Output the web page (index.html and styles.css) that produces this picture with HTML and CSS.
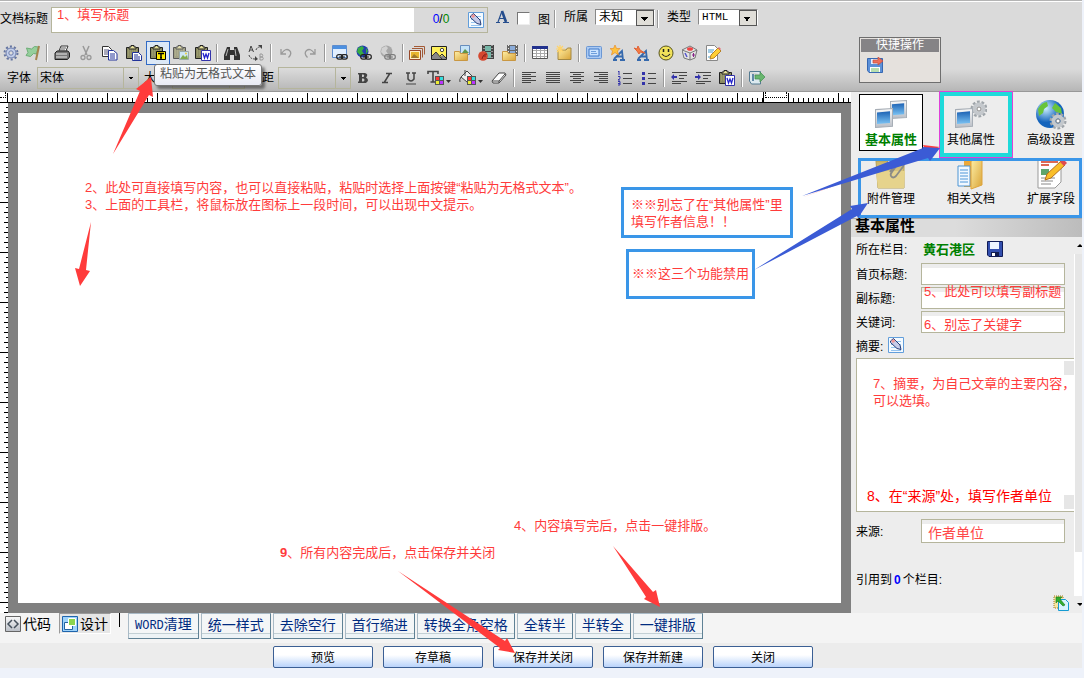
FILE: index.html
```html
<!DOCTYPE html>
<html lang="zh-CN">
<head>
<meta charset="utf-8">
<title>文档编辑</title>
<link rel="stylesheet" href="styles.css">
</head>
<body>
<svg class="sprite" aria-hidden="true">
  <defs>
    <linearGradient id="gBlue" x1="0" y1="0" x2="0" y2="1"><stop offset="0" stop-color="#1d62b4"/><stop offset="1" stop-color="#7cc4f4"/></linearGradient>
    <linearGradient id="gGold" x1="0" y1="0" x2="1" y2="1"><stop offset="0" stop-color="#fff0a8"/><stop offset="1" stop-color="#d9a437"/></linearGradient>
    <linearGradient id="gKhaki" x1="0" y1="0" x2="0" y2="1"><stop offset="0" stop-color="#c9b367"/><stop offset="1" stop-color="#f0e0a2"/></linearGradient>
    <radialGradient id="gGlobe" cx="35%" cy="30%"><stop offset="0" stop-color="#cdf0ff"/><stop offset="1" stop-color="#1464bc"/></radialGradient>
    <linearGradient id="gGrey" x1="0" y1="0" x2="0" y2="1"><stop offset="0" stop-color="#fafafa"/><stop offset="1" stop-color="#b9bec6"/></linearGradient>
  </defs>
  <symbol id="clip" viewBox="0 0 16 16"><path d="M.5 2.500h12v11H.5z" fill="#8b8b62" stroke="#222"/><path d="M2 4h9M2 6h9M2 8h9M2 10h9" stroke="#a9a97c" stroke-dasharray="1 1"/><path d="M3 4V2h2V.5h3V2h2v2z" fill="#e8e29a" stroke="#222"/></symbol>
  <symbol id="chain" viewBox="0 0 12 6"><rect x=".7" y=".7" width="6" height="4.400" rx="2" fill="none" stroke="#222" stroke-width="1.200"/><rect x="5.300" y=".7" width="6" height="4.400" rx="2" fill="none" stroke="#222" stroke-width="1.200"/><path d="M3 3h6" stroke="#222"/></symbol>
  <symbol id="gear" viewBox="0 0 16 16"><circle cx="8" cy="8" r="6.500" fill="none" stroke="#6474a0" stroke-width="2" stroke-dasharray="2.100 2"/><circle cx="8" cy="8" r="5" fill="#c3cfea" stroke="#6b7daf"/><circle cx="8" cy="8" r="2.200" fill="#ddd" stroke="#6b7daf"/></symbol>
  <symbol id="flag" viewBox="0 0 16 16"><path d="M1.500 3l5 1 3-2.500 4 .5-2 7-3-.5-3 3-4.500-1 2-3z" fill="#95cf9c" stroke="#6dae77"/><path d="M14 1l-3 14" stroke="#a5854e" stroke-width="2"/></symbol>
  <symbol id="printer" viewBox="0 0 16 16"><path d="M5 6l2-5h7l-2 5" fill="#fff" stroke="#333"/><path d="M7 3h5M6 5h5" stroke="#555"/><path d="M1 8l2-2h11l1.500 2v4l-2 2.500H1z" fill="#777" stroke="#222"/><path d="M2 9h11M2 12h11" stroke="#eee"/></symbol>
  <symbol id="cut" viewBox="0 0 16 16"><path d="M5 1l4 9M11 1l-4 9" stroke="#999" stroke-width="1.500" fill="none"/><circle cx="5" cy="12.500" r="2" fill="none" stroke="#999" stroke-width="1.300"/><circle cx="11" cy="12.500" r="2" fill="none" stroke="#999" stroke-width="1.300"/></symbol>
  <symbol id="copy" viewBox="0 0 16 16"><path d="M.5 1.500h6l3 3v7h-9z" fill="#fff" stroke="#333"/><path d="M2 5h5M2 7h5M2 9h5" stroke="#557"/><path d="M6.500 5.500h5l3.500 3v6.500H6.500z" fill="#fff" stroke="#239"/><path d="M8 9h5M8 11h5M8 13h5" stroke="#239"/></symbol>
  <symbol id="paste" viewBox="0 0 16 16"><use href="#clip"/><path d="M6.500 7.500h6l3 3v5h-9z" fill="#fff" stroke="#239"/><path d="M8 10h4M8 12h6M8 14h6" stroke="#239"/></symbol>
  <symbol id="pastetext" viewBox="0 0 16 16"><use href="#clip"/><path d="M6.500 6.500h9v8h-9z" fill="#ffe900" stroke="#000"/><path d="M8 8.500h6M11 8.500v5M10 13h2" stroke="#000" stroke-width="1.500"/></symbol>
  <symbol id="pasteimg" viewBox="0 0 16 16"><g opacity=".7"><use href="#clip"/></g><path d="M6.500 6.500h9v8h-9z" fill="#cde6f4" stroke="#9aa"/><path d="M7 14l3-4 2 2 2-2 1 4z" fill="#83ab4d"/><circle cx="13" cy="8.500" r="1" fill="#eccd3b"/></symbol>
  <symbol id="pasteword" viewBox="0 0 16 16"><use href="#clip"/><path d="M6.500 5.500h9v10h-9z" fill="#fff" stroke="#33a"/><path d="M8 8l1.500 5L11 9l1.500 4L14 8" fill="none" stroke="#22c" stroke-width="1.300"/></symbol>
  <symbol id="find" viewBox="0 0 16 16"><path d="M3 2h3v3h4V2h3l3 8v5h-6v-5H6v5H0v-5z" fill="#333"/><path d="M4 4L2 11M11 4l1 7" stroke="#bbb"/></symbol>
  <symbol id="replace" viewBox="0 0 16 16"><path d="M1 7l2-6 2.500 6M2 5h3" fill="none" stroke="#444"/><path d="M12 9v6h2.500q1.500-1.500 0-3H12h2q1.500-1.500 0-3z" fill="none" stroke="#999"/><path d="M8 5q1-3 4-3M1 10q1 4 6 4" fill="none" stroke="#444" stroke-dasharray="2 1"/><path d="M7 11l3 3-3 2zM10 0l4 0v4z" fill="#444"/></symbol>
  <symbol id="undo" viewBox="0 0 16 16"><path d="M3 4v5h5M3.500 8.500q4-6 8-3 3 3-1 7" fill="none" stroke="#999" stroke-width="1.300"/></symbol>
  <symbol id="redo" viewBox="0 0 16 16"><path d="M13 4v5H8M12.500 8.500q-4-6-8-3-3 3 1 7" fill="none" stroke="#999" stroke-width="1.300"/></symbol>
  <symbol id="linkwin" viewBox="0 0 16 16"><path d="M.5.5h14v12H.5z" fill="#e1efff" stroke="#5d8dce"/><path d="M1 1h13v3H1z" fill="#4d90e0"/><use href="#chain" x="4" y="9" width="12" height="6"/></symbol>
  <symbol id="linkglobe" viewBox="0 0 16 16"><circle cx="6.500" cy="6.500" r="6" fill="#223fae"/><path d="M2 3l4-2 2 2-2 3 2 3-3 2-4-4zM10 3l2 3-2 3z" fill="#35ad43"/><use href="#chain" x="4" y="9" width="12" height="6"/></symbol>
  <symbol id="unlink" viewBox="0 0 16 16"><g opacity=".5"><circle cx="6.500" cy="6.500" r="6" fill="#777"/><path d="M2 3l4-2 2 2-2 3 2 3-3 2-4-4z" fill="#ccc"/><use href="#chain" x="4" y="9" width="12" height="6"/></g></symbol>
  <symbol id="album" viewBox="0 0 16 16"><path d="M5 1.500h10.500v8M3 3.500h10.500v9" fill="none" stroke="#a35b37"/><path d="M.5 5.500h11v9H.5z" fill="#fff0c1" stroke="#97482a"/><path d="M2 7h8v6H2z" fill="#e7b52c"/><path d="M2 13l3-4 5 4z" fill="#9e772b"/></symbol>
  <symbol id="image" viewBox="0 0 16 16"><path d="M.5 1.500h15v13H.5z" fill="#fff15a" stroke="#222"/><path d="M1 14V11l4-4 4 5 3-2 3 3v1z" fill="#888"/><path d="M1 11l4-4 6 7M9 11l2-2 4 4" fill="none" stroke="#333"/><circle cx="11" cy="5" r="1.700" fill="#fff" stroke="#444"/></symbol>
  <symbol id="folderimg" viewBox="0 0 16 16"><path d="M6.500.5h9v9h-9z" fill="#c5e3f8" stroke="#678dbd"/><path d="M8 8l3-4 4 4z" fill="#60964a"/><path d="M.5 6.500h5l1 2h7v7H.5z" fill="url(#gGold)" stroke="#c99742"/></symbol>
  <symbol id="flash" viewBox="0 0 16 16"><path d="M4 0h12v14H4z" fill="#444"/><path d="M6 0v14M14 0v14" stroke="#eee" stroke-dasharray="1 2"/><path d="M7 1h6v5H7zM7 7h6v6H7z" fill="#76b7a8"/><circle cx="5" cy="11" r="4.800" fill="#d5482f"/><path d="M4 14q1-5 5-5M5 11h3" stroke="#8c2018" fill="none"/></symbol>
  <symbol id="media" viewBox="0 0 16 16"><path d="M5 0h11v11H5z" fill="#666"/><path d="M8 1h5v4H8zM8 6h5v5H8z" fill="#8aabd8"/><path d="M6.500 0v11M14.500 0v11" stroke="#eee" stroke-dasharray="1 2"/><path d="M.5 6.500h5l1 2h7v7H.5z" fill="url(#gGold)" stroke="#c99742"/></symbol>
  <symbol id="table" viewBox="0 0 16 16"><path d="M.5 1.500h15v12H.5z" fill="#fff" stroke="#555"/><path d="M1 5.500h14M1 8.500h14M1 11.500h14M4.500 4v9M8.500 4v9M12.500 4v9" stroke="#aaa"/><path d="M0 1h16v3H0z" fill="#22328e"/></symbol>
  <symbol id="newfolder" viewBox="0 0 16 16"><path d="M2 5h8l1.500-2h3.500v11.500H2z" fill="url(#gGold)" stroke="#a48842"/><path d="M4 0v9M0 4h9M1 1l6 6M7 1L1 7" stroke="#ffd46b" stroke-width="1.200"/></symbol>
  <symbol id="panel" viewBox="0 0 16 16"><rect x=".5" y="1.500" width="15" height="12" rx="1" fill="#a9c9f3" stroke="#6b97d3"/><path d="M3 4h10v7H3z" fill="#cbe3ff" stroke="#3f78c8"/><path d="M5 6.500h5M5 8.500h6" stroke="#6d9ddb"/></symbol>
  <symbol id="stara" viewBox="0 0 16 16"><path d="M4 14L12 6l1 9M7 11.500h6M3 15h4M10 15h5" stroke="#3569ad" stroke-width="1.800" fill="none"/><path d="M5 0l1.500 3.500H10L7.500 6l1 4L5 7.500 1.500 10l1-4L0 3.500h3.500z" fill="#ffc33d" stroke="#e88e28" stroke-width=".7"/></symbol>
  <symbol id="fixa" viewBox="0 0 16 16"><path d="M4 14L12 6l1 9M7 11.500h6M3 15h4M10 15h5" stroke="#3569ad" stroke-width="1.800" fill="none"/><path d="M0 3l3 1 1-3 2 4 5 3-5-1-1 2-2-3z" fill="#f57c42" stroke="#df643a"/></symbol>
  <symbol id="smile" viewBox="0 0 16 16"><circle cx="8" cy="8" r="7" fill="#f1e25a" stroke="#57541f"/><path d="M4 9q4 5 8 0" fill="none" stroke="#222" stroke-width="1.200"/><path d="M5.500 4v3M10.500 4v3" stroke="#222" stroke-width="1.500"/></symbol>
  <symbol id="cube" viewBox="0 0 16 16"><path d="M8 1l7 4-2 8-5 2-6-2-2-8z" fill="#e4e4e4" stroke="#777"/><path d="M0 5l8 3 7-3M8 8v7" fill="none" stroke="#777"/><ellipse cx="8" cy="4" rx="3" ry="1.800" fill="#f04343"/><path d="M3 8l2 4" stroke="#55c" stroke-width="1.500"/><path d="M11.500 8v4M10 10h3" stroke="#828"/></symbol>
  <symbol id="edit" viewBox="0 0 16 16"><path d="M1.500.5h8l3 3v12h-11z" fill="#fff" stroke="#888"/><path d="M3 5h6M3 7h5M3 12h7" stroke="#479ac9"/><path d="M5 14l1-4 7-7 3 3-7 7z" fill="#ffcf35" stroke="#b88126"/><path d="M13 3l1-1 2 2-1 1z" fill="#e56c77"/></symbol>
  <symbol id="bold" viewBox="0 0 16 16"><path d="M3 3h7q4 1 1 4.500 4 2.500 0 5.500H3v-1.500h1V4.500H3zM7 4.500v2.500h1.500q1.500-1.300 0-2.500zM7 8.500v3h1.500q2-1.500 0-3z" fill="#444" fill-rule="evenodd"/></symbol>
  <symbol id="italic" viewBox="0 0 16 16"><path d="M7 3.500h6M3 12.500h6M10.500 4l-5 8" stroke="#444" stroke-width="1.500"/></symbol>
  <symbol id="underline" viewBox="0 0 16 16"><path d="M3 3h4M9 3h4M5 3v6q3 4 6 0V3" fill="none" stroke="#444" stroke-width="1.500"/><path d="M3 14h10" stroke="#444"/></symbol>
  <symbol id="swatch" viewBox="0 0 9 9"><path d="M0 0h9v9H0z" fill="#555"/><path d="M1 1h3v3H1z" fill="#f33"/><path d="M5 1h3v3H5z" fill="#3dd"/><path d="M1 5h3v3H1z" fill="#ee3"/><path d="M5 5h3v3H5z" fill="#b3f"/></symbol>
  <symbol id="forecolor" viewBox="0 0 24 16"><path d="M1 4V1.500h10V4M6 2v10M3.500 12h5" stroke="#444" stroke-width="1.600" fill="none"/><use href="#swatch" x="8" y="6" width="9" height="9"/><path d="M19 10h5l-2.500 3z" fill="#333"/></symbol>
  <symbol id="backcolor" viewBox="0 0 24 16"><path d="M2 7l6-6 6 6-6 5z" fill="#eee" stroke="#444"/><path d="M2 7q-2 3-1 5M6 0v6" stroke="#444" fill="none"/><use href="#swatch" x="8" y="6" width="9" height="9"/><path d="M19 10h5l-2.500 3z" fill="#333"/></symbol>
  <symbol id="eraser" viewBox="0 0 16 16"><path d="M1 11l7-8h6l1 2-7 8H2z" fill="#fff" stroke="#444"/><path d="M2 11h6l6-7M8 11v2" fill="none" stroke="#444"/></symbol>
  <symbol id="left" viewBox="0 0 16 16"><path d="M1 2.500h14M1 4.500h9M1 6.500h14M1 8.500h9M1 10.500h14M1 12.500h9" stroke="#444"/></symbol>
  <symbol id="center" viewBox="0 0 16 16"><path d="M1 2.500h14M4 4.500h8M1 6.500h14M4 8.500h8M1 10.500h14M4 12.500h8" stroke="#444"/></symbol>
  <symbol id="justify" viewBox="0 0 16 16"><path d="M1 2.500h14M1 4.500h14M1 6.500h14M1 8.500h14M1 10.500h14M1 12.500h14" stroke="#444"/></symbol>
  <symbol id="right" viewBox="0 0 16 16"><path d="M1 2.500h14M6 4.500h9M1 6.500h14M6 8.500h9M1 10.500h14M6 12.500h9" stroke="#444"/></symbol>
  <symbol id="ol" viewBox="0 0 16 16"><path d="M6 3.500h9M6 8.500h9M6 13.500h9" stroke="#444"/><path d="M1 2l1-1v4M1 6.500h2v2l-2 1.500h2M1 11.500h2v2H1h2V15H1" stroke="#33a" fill="none"/></symbol>
  <symbol id="ul" viewBox="0 0 16 16"><path d="M7 3.500h8M7 8.500h8M7 13.500h8" stroke="#444"/><path d="M1 2h3v3H1zM1 7h3v3H1zM1 12h3v3H1z" fill="#33a"/></symbol>
  <symbol id="outdent" viewBox="0 0 16 16"><path d="M1 2.500h15M8 5.500h8M8 8.500h5M1 11.500h15M1 13.500h9" stroke="#444"/><path d="M0 7l3-3v2h3v2H3v2z" fill="#33a"/></symbol>
  <symbol id="indent" viewBox="0 0 16 16"><path d="M1 2.500h15M8 5.500h8M8 8.500h5M1 11.500h15M1 13.500h9" stroke="#444"/><path d="M6 7L3 4v2H0v2h3v2z" fill="#33a"/></symbol>
  <symbol id="export" viewBox="0 0 16 16"><path d="M.5 1.500h11v3M.5 2v9l2 3h9v-3" fill="#dce9ef" stroke="#557b91"/><path d="M4 4v7" stroke="#6089a6" stroke-width="2"/><path d="M6 5h5V2l5 5-5 5V9H6z" fill="#69b66e" stroke="#3f8e51" stroke-width=".7"/></symbol>
  <symbol id="pencilbox" viewBox="0 0 16 16"><path d="M.5.5h15v15H.5z" fill="#f4faff" stroke="#629edb"/><path d="M3 4.500h10M3 7.500h10M3 10.500h10M3 13.500h10" stroke="#94c3ef"/><path d="M2.500 4l3-2.500 6.500 6.500 1 4.500-4-1-6.500-6z" fill="#c6cbe8" stroke="#263c76"/><path d="M3 4l2.500-2 2 2-2.500 2z" fill="#ee9696"/></symbol>
  <symbol id="fonta" viewBox="0 0 16 16"><path d="M4 13L8 2M5.500 9.500h5M2 13.500h4M9 13.500h6" fill="none" stroke="#254d8d" stroke-width="1.200"/><path d="M8 2l4 11" stroke="#254d8d" stroke-width="2.600"/></symbol>
  <symbol id="savearrow" viewBox="0 0 16 16"><path d="M.5 1.500h15v14H2l-1.500-2z" fill="#5d91d8" stroke="#3768b2"/><path d="M4 2h8v5H4z" fill="#e4f0ff"/><path d="M3 10h10v5H3z" fill="#fff"/><path d="M4 12h8M4 14h8" stroke="#70bf61"/><path d="M6 3h5V0l5 4-5 4V6H6z" fill="#ef7059" stroke="#c64b3c" stroke-width=".7"/></symbol>
  <symbol id="disk" viewBox="0 0 16 16"><path d="M.5.5h15v15H2L.5 14z" fill="#334fae" stroke="#101b56"/><path d="M3 1h9v7H3z" fill="#edf4ff"/><path d="M4 11h8v4H4z" fill="#111c4c"/><path d="M5 12h3v3H5z" fill="#fff"/></symbol>
  <symbol id="pagearrow" viewBox="0 0 16 16"><path d="M1 1h9v12H1z" fill="#f7e5a0" stroke="#9e7821" stroke-dasharray="1 1"/><path d="M5.500 4.500h7l3 3v8h-10z" fill="#d8f3ff" stroke="#159bd2"/><path d="M3 2h6L7 4l5 6-2 1-5-5-2 2z" fill="#32ad2e" stroke="#17791c" stroke-width=".6"/></symbol>
  <symbol id="code" viewBox="0 0 16 16"><path d="M.5.5h15v15H.5z" fill="url(#gGrey)" stroke="#666"/><path d="M7 4L3 8l4 4M9 4l4 4-4 4" fill="none" stroke="#45505c" stroke-width="1.500"/></symbol>
  <symbol id="design" viewBox="0 0 16 16"><path d="M.5.5h15v15H.5z" fill="#9dd2fa" stroke="#1f65ad"/><path d="M2.500 6.500h8v7h-8z" fill="#fff" stroke="#2263a1"/><path d="M6.500 2.500h7v7h-7z" fill="#8cd44e" stroke="#fff"/></symbol>
  <symbol id="screen" viewBox="0 0 18 18" preserveAspectRatio="none"><path d="M.5 1.500l17-1v16l-17 1z" fill="url(#gGrey)" stroke="#a7aeb6"/><path d="M2 4l13-1v10.500L2 14.500z" fill="url(#gBlue)"/></symbol>
  <symbol id="cog" viewBox="0 0 18 18"><circle cx="9" cy="9" r="7" fill="none" stroke="#9fa5aa" stroke-width="3" stroke-dasharray="2.700 1.700"/><circle cx="9" cy="9" r="4.500" fill="none" stroke="#c4c8cc" stroke-width="4"/><circle cx="9" cy="9" r="2" fill="#fff" stroke="#888"/></symbol>
  <symbol id="nbasic" viewBox="0 0 32 32"><use href="#screen" x="15" y="1" width="17" height="19"/><use href="#screen" x="0" y="9" width="18" height="20"/></symbol>
  <symbol id="nother" viewBox="0 0 32 32"><use href="#cog" x="15" y="0" width="18" height="20"/><use href="#screen" x="0" y="9" width="18" height="20"/></symbol>
  <symbol id="nadv" viewBox="0 0 32 32"><circle cx="15" cy="15" r="14" fill="url(#gGlobe)"/><path d="M3 10q4-7 9-7l1 4-4 3-1 4-4 3zM20 4l6 5 1 6-6-2-4-4z" fill="#68c43b"/><use href="#cog" x="14" y="13" width="18" height="18"/></symbol>
  <symbol id="nattach" viewBox="0 0 32 32"><path d="M1 3h11l3 3h14v24H3z" fill="url(#gKhaki)" stroke="#b59f56"/><path d="M1 15l11-2h18l-1 17H3z" fill="#e6d38c"/><path d="M15 14l6-9q3-4 6-1 3 3 0 6l-6 8q-3 3-5 0-1-2 1-4l5-7" fill="none" stroke="#8c8c87" stroke-width="1.800"/></symbol>
  <symbol id="nrelated" viewBox="0 0 32 32"><path d="M9 1h12v28H9z" fill="#eda93a"/><path d="M3 8h12v20H3z" fill="#f1f8ff" stroke="#4d94d3"/><path d="M5 12h8M5 15h8M5 18h8M5 21h8M5 24h8" stroke="#4c96d8"/><path d="M16 3l11-3v27l-11 4z" fill="url(#gGold)" stroke="#dea43c"/></symbol>
  <symbol id="nextend" viewBox="0 0 32 32"><path d="M3 1h23v23l-6 6H3z" fill="#fff" stroke="#999"/><path d="M6 4h17M6 7h8" stroke="#dd6954" stroke-width="2"/><path d="M6 11h8v6H6z" fill="#5ea56c"/><path d="M6 20h14M6 23h12M6 26h10" stroke="#888"/><path d="M10 22l2-6L26 3l4 4-14 13z" fill="#f9be29" stroke="#b36f20"/><path d="M25 4l3-3 4 4-3 3z" fill="#df4a4e"/></symbol>
</svg>

<div class="app">
  <header class="header">
    <div class="bars">
      <div class="title-row">
        <label class="title-label" for="title">文档标题</label>
        <div class="title-box">
          <input class="title-input" id="title" type="text">
          <span class="counter"><span class="count-now">0</span>/<span class="count-max">0</span></span>
          <button class="mini" aria-label="编辑标题"><svg><use href="#pencilbox"/></svg></button>
        </div>
        <button class="tool" aria-label="标题字体"><svg><use href="#fonta"/></svg></button>
        <label class="pic-check"><input class="check" type="checkbox"><span class="pic-word">图</span></label>
        <i class="sep"></i>
        <label class="pick">所属<span class="pick-wrap"><select class="pick-select"><option>未知</option></select></span></label>
        <i class="sep"></i>
        <label class="pick">类型<span class="pick-wrap"><select class="pick-select pick-mono"><option>HTML</option></select></span></label>
      </div>
      <div class="tools" role="toolbar" aria-label="编辑">
        <button class="tool narrow" aria-label="设置"><svg><use href="#gear"/></svg></button>
        <button class="tool narrow" aria-label="标记"><svg><use href="#flag"/></svg></button>
        <i class="sep"></i>
        <button class="tool" aria-label="打印"><svg><use href="#printer"/></svg></button>
        <button class="tool" aria-label="剪切"><svg><use href="#cut"/></svg></button>
        <button class="tool" aria-label="复制"><svg><use href="#copy"/></svg></button>
        <button class="tool" aria-label="粘贴"><svg><use href="#paste"/></svg></button>
        <button class="tool active" aria-label="粘贴为无格式文本" aria-describedby="tip"><svg><use href="#pastetext"/></svg><span class="tooltip" id="tip" role="tooltip">粘贴为无格式文本</span></button>
        <button class="tool narrow" aria-label="粘贴图片"><svg><use href="#pasteimg"/></svg></button>
        <button class="tool narrow" aria-label="从Word粘贴"><svg><use href="#pasteword"/></svg></button>
        <i class="sep"></i>
        <button class="tool" aria-label="查找"><svg><use href="#find"/></svg></button>
        <button class="tool" aria-label="替换"><svg><use href="#replace"/></svg></button>
        <i class="sep"></i>
        <button class="tool" aria-label="撤销"><svg><use href="#undo"/></svg></button>
        <button class="tool" aria-label="重做"><svg><use href="#redo"/></svg></button>
        <i class="sep"></i>
        <button class="tool" aria-label="页内链接"><svg><use href="#linkwin"/></svg></button>
        <button class="tool" aria-label="超链接"><svg><use href="#linkglobe"/></svg></button>
        <button class="tool" aria-label="取消链接"><svg><use href="#unlink"/></svg></button>
        <i class="sep"></i>
        <button class="tool narrow" aria-label="图集"><svg><use href="#album"/></svg></button>
        <button class="tool narrow" aria-label="图片"><svg><use href="#image"/></svg></button>
        <button class="tool" aria-label="图片库"><svg><use href="#folderimg"/></svg></button>
        <button class="tool" aria-label="动画"><svg><use href="#flash"/></svg></button>
        <button class="tool" aria-label="视频"><svg><use href="#media"/></svg></button>
        <i class="sep"></i>
        <button class="tool" aria-label="表格"><svg><use href="#table"/></svg></button>
        <button class="tool" aria-label="新建附件"><svg><use href="#newfolder"/></svg></button>
        <i class="sep"></i>
        <button class="tool" aria-label="面板"><svg><use href="#panel"/></svg></button>
        <button class="tool" aria-label="样式"><svg><use href="#stara"/></svg></button>
        <button class="tool" aria-label="清除样式"><svg><use href="#fixa"/></svg></button>
        <button class="tool" aria-label="表情"><svg><use href="#smile"/></svg></button>
        <button class="tool" aria-label="组件"><svg><use href="#cube"/></svg></button>
        <button class="tool narrow" aria-label="编辑源"><svg><use href="#edit"/></svg></button>
      </div>
      <div class="tools format" role="toolbar" aria-label="格式">
        <label class="combo-label" for="font">字体</label><select class="combo combo-font" id="font"><option>宋体</option></select>
        <label class="combo-label" for="size">大小</label><select class="combo" id="size"><option></option></select>
        <label class="combo-label" for="space">行距</label><select class="combo" id="space"><option></option></select>
        <button class="tool" aria-label="加粗"><svg><use href="#bold"/></svg></button>
        <button class="tool" aria-label="斜体"><svg><use href="#italic"/></svg></button>
        <button class="tool" aria-label="下划线"><svg><use href="#underline"/></svg></button>
        <button class="tool wide" aria-label="文字颜色"><svg><use href="#forecolor"/></svg></button>
        <button class="tool wide" aria-label="背景颜色"><svg><use href="#backcolor"/></svg></button>
        <button class="tool" aria-label="清除格式"><svg><use href="#eraser"/></svg></button>
        <i class="sep"></i>
        <button class="tool" aria-label="左对齐"><svg><use href="#left"/></svg></button>
        <button class="tool" aria-label="两端对齐"><svg><use href="#justify"/></svg></button>
        <button class="tool" aria-label="居中"><svg><use href="#center"/></svg></button>
        <button class="tool" aria-label="右对齐"><svg><use href="#right"/></svg></button>
        <button class="tool" aria-label="编号"><svg><use href="#ol"/></svg></button>
        <button class="tool" aria-label="项目符号"><svg><use href="#ul"/></svg></button>
        <i class="sep"></i>
        <button class="tool" aria-label="减少缩进"><svg><use href="#outdent"/></svg></button>
        <button class="tool" aria-label="增加缩进"><svg><use href="#indent"/></svg></button>
        <button class="tool" aria-label="Word排版"><svg><use href="#pasteword"/></svg></button>
        <i class="sep"></i>
        <button class="tool" aria-label="导出"><svg><use href="#export"/></svg></button>
      </div>
    </div>
    <section class="quick">
      <h2 class="quick-title">快捷操作</h2>
      <button class="mini" aria-label="保存"><svg><use href="#savearrow"/></svg></button>
    </section>
  </header>

  <main class="main">
    <section class="editor">
      <div class="ruler-top"><i class="dots dots-start"></i><i class="ticks ticks-long"></i><i class="ticks ticks-mid"></i><i class="dots"></i><i class="ticks ticks-rest"></i></div>
      <div class="stage"><div class="ruler-left"></div><div class="paper"></div></div>
    </section>

    <aside class="side">
      <nav class="nav">
        <a class="nav-item nav-on" href="#basic"><svg><use href="#nbasic"/></svg>基本属性</a>
        <a class="nav-item" href="#other"><svg><use href="#nother"/></svg>其他属性</a>
        <a class="nav-item" href="#advanced"><svg><use href="#nadv"/></svg>高级设置</a>
        <a class="nav-item nav-low" href="#attach"><svg><use href="#nattach"/></svg>附件管理</a>
        <a class="nav-item nav-low" href="#related"><svg><use href="#nrelated"/></svg>相关文档</a>
        <a class="nav-item nav-low" href="#extend"><svg><use href="#nextend"/></svg>扩展字段</a>
      </nav>
      <h2 class="side-title">基本属性</h2>
      <div class="side-body">
        <form class="form">
          <div class="row"><span class="name">所在栏目:</span><strong class="column">黄石港区</strong><button type="button" class="mini" aria-label="选择栏目"><svg><use href="#disk"/></svg></button></div>
          <div class="row"><label class="name" for="home">首页标题:</label><input class="field" id="home" type="text"></div>
          <div class="row"><label class="name" for="sub">副标题:</label><input class="field" id="sub" type="text"></div>
          <div class="row"><label class="name" for="keys">关键词:</label><input class="field" id="keys" type="text"></div>
          <div class="row summary-row"><label for="summary">摘要:</label><button type="button" class="mini" aria-label="编辑摘要"><svg><use href="#pencilbox"/></svg></button></div>
          <textarea class="summary" id="summary"></textarea>
          <div class="row source-row"><label class="name" for="source">来源:</label><input class="field source" id="source" type="text" value="作者单位"></div>
          <p class="quote">引用到<b class="quote-num">0</b>个栏目:</p>
          <button type="button" class="mini add-ref" aria-label="引用栏目"><svg><use href="#pagearrow"/></svg></button>
        </form>
        <div class="scroll">
          <svg class="scroll-end" viewBox="0 0 8 17"><path d="M3 10l3-3 3 3z"/></svg>
          <i class="scroll-thumb"></i>
          <svg class="scroll-end scroll-down" viewBox="0 0 8 17"><path d="M3 7h6l-3 3z"/></svg>
        </div>
      </div>
    </aside>
  </main>

  <div class="modes">
    <button class="mode"><svg><use href="#code"/></svg>代码</button>
    <button class="mode mode-on"><svg><use href="#design"/></svg>设计</button>
    <i class="bar"></i>
    <div class="commands">
      <button class="command"><span class="latin">WORD</span>清理</button>
      <button class="command">统一样式</button>
      <button class="command">去除空行</button>
      <button class="command">首行缩进</button>
      <button class="command">转换全角空格</button>
      <button class="command">全转半</button>
      <button class="command">半转全</button>
      <button class="command">一键排版</button>
    </div>
  </div>
  <footer class="actions">
    <button class="action">预览</button>
    <button class="action">存草稿</button>
    <button class="action">保存并关闭</button>
    <button class="action">保存并新建</button>
    <button class="action">关闭</button>
  </footer>

  <div class="notes">
    <p class="note n1">1、填写标题</p>
    <p class="note n2">2、此处可直接填写内容，也可以直接粘贴，粘贴时选择上面按键“粘贴为无格式文本”。<br>3、上面的工具栏，将鼠标放在图标上一段时间，可以出现中文提示。</p>
    <p class="note n4">4、内容填写完后，点击一键排版。</p>
    <p class="note n9"><b>9</b>、所有内容完成后，点击保存并关闭</p>
    <p class="note n5">5、此处可以填写副标题</p>
    <p class="note n6">6、别忘了关键字</p>
    <p class="note n7">7、摘要，为自己文章的主要内容，<br>可以选填。</p>
    <p class="note n8">8、在“来源”处，填写作者单位</p>
    <p class="note boxed b1">※※别忘了在“其他属性”里<br>填写作者信息！！</p>
    <p class="note boxed b2">※※这三个功能禁用</p>
    <i class="frame"></i>
    <i class="cyan"></i>
    <svg class="arrows" viewBox="0 0 1084 678" width="1084" height="678">
      <g fill="#ff3b3b">
        <path d="M113 154L140 91 136 89 151 77 153 97 149 95z"/>
        <path d="M91 222L79 269 75 268 80 286 90 271 86 270z"/>
        <path d="M613 546L646 597 644 599 660 607 656 590 653 592z"/>
        <path d="M398 571L500 648 498 650 515 653 507 638 505 641z"/>
        <path d="M801 198L926 151 923 145 940 147z"/>
      </g>
      <g fill="#3b5bd5">
        <path d="M802 196L923 148 922 147 940 148 930 161 928 158z"/>
        <path d="M754 270L852 209 850 206 868 203 858 218 857 216z"/>
      </g>
    </svg>
  </div>
</div>
</body>
</html>
```
FILE: styles.css
```css
* { box-sizing: border-box; }
body {
  margin: 0;
  background: #eef2fa;
  color: #000;
  font: 12px/16px "Liberation Sans", "Noto Sans CJK SC", sans-serif;
}
.sprite { position: absolute; width: 0; height: 0; }
button, input, select, textarea { font: inherit; color: inherit; margin: 0; }
button { padding: 0; border: 0; background: none; }
svg { display: block; width: 16px; height: 16px; overflow: visible; }
p, h2 { margin: 0; }
a { color: inherit; text-decoration: none; }

.app {
  position: relative;
  display: flex;
  flex-direction: column;
  min-height: 100vh;
  padding: 0 2px 10px 0;
}

/* header */
.header {
  display: grid;
  grid-template-columns: minmax(0, 1fr) 231px;
  height: 92px;
  border-top: 1px solid #b4b4b4;
  border-bottom: 1px solid #989898;
  background: linear-gradient(#fff 1px, #dadada 1px, #dadada 68px, #b6b6b6);
}
.title-row { display: flex; height: 39px; padding-top: 6px; align-items: flex-start; }
.title-label { width: 51px; padding-top: 4px; white-space: nowrap; }
.title-box {
  display: flex;
  align-items: center;
  width: 437px;
  height: 26px;
  border: 1px solid #b5b59c;
}
.title-input { width: 362px; height: 24px; border: 0; background: #fff; }
.counter { width: 54px; padding-bottom: 2px; text-align: center; }
.count-now { color: #00f; }
.count-max { color: #080; }
.title-row .tool { height: 20px; margin-left: 2px; }
.pic-check { display: flex; width: 38px; padding: 5px 0 0 3px; }
.check {
  appearance: none;
  width: 13px;
  height: 13px;
  margin-right: 8px;
  border: 1px solid #777;
  border-right-color: #eee;
  border-bottom-color: #eee;
  background: #fff;
}
.title-row .sep { margin-top: 3px; }
.pick { display: flex; gap: 7px; padding: 2px 0 0 6px; }
.pick-wrap { position: relative; display: flex; height: 16px; }
.pick-select {
  appearance: none;
  width: 60px;
  height: 16px;
  padding: 0 3px;
  border: 1px solid #888;
  border-right-color: #fff;
  border-bottom-color: #fff;
  border-radius: 0;
  background: #fff;
  line-height: 14px;
}
.pick-mono { font-family: "Liberation Mono", monospace; font-size: 11px; }
.pick-wrap::after {
  content: "";
  position: absolute;
  top: 1px;
  right: 1px;
  width: 16px;
  height: 14px;
  border: 1px solid #555;
  background: conic-gradient(from -45deg at 50% 100%, #000 90deg, transparent 0) 3px 6px / 8px 4px no-repeat #e0ded8;
  pointer-events: none;
}

.tools { display: flex; align-items: center; height: 24px; margin-top: 1px; }
.tool {
  position: relative;
  display: flex;
  flex: none;
  align-items: center;
  justify-content: center;
  width: 24px;
  height: 24px;
}
.narrow { width: 22px; }
.wide { width: 32px; }
.wide svg { width: 24px; }
.active { border: 1px solid #316ac5; background: #dce8f6; }
.sep {
  flex: none;
  width: 6px;
  height: 18px;
  background: linear-gradient(90deg, transparent 2px, #999 2px, #999 3px, #fff 3px, #fff 4px, transparent 4px);
}
.tooltip {
  position: absolute;
  z-index: 3;
  top: 22px;
  left: 7px;
  padding: 1px 5px 2px;
  border: 1px solid #767676;
  border-radius: 3px;
  background: linear-gradient(#fff, #e8eaf4);
  box-shadow: 3px 3px 3px rgba(0, 0, 0, .45);
  color: #555;
  line-height: 17px;
  white-space: nowrap;
}
.format { margin-top: 1px; }
.combo-label { flex: none; width: 33px; padding-left: 5px; text-align: left; white-space: nowrap; }
.combo-label:first-child { width: 37px; padding-left: 7px; }
.combo {
  appearance: none;
  width: 73px;
  height: 22px;
  padding: 0 2px;
  border: 1px solid #b5b59c;
  border-radius: 0;
  background:
    conic-gradient(from -45deg at 50% 100%, #000 90deg, transparent 0) right 4px center / 6px 3px no-repeat,
    linear-gradient(#b5b59c, #b5b59c) right 14px top / 1px 100% no-repeat;
}
.combo-font { width: 102px; }

.quick {
  align-self: start;
  width: 82px;
  height: 46px;
  margin: 36px 0 0 8px;
  padding: 1px;
  border: 1px solid #6e6e6e;
  background: #e5e1dd;
}
.quick-title { height: 13px; background: #858386; color: #fff; font-size: 12px; font-weight: 400; line-height: 13px; text-align: center; }
.quick .mini { margin: 5px 0 0 6px; }
.mini { flex: none; width: 16px; height: 16px; }

/* editor */
.main { display: grid; flex: 1; grid-template-columns: minmax(0, 1fr) 231px; }
.editor { display: flex; flex-direction: column; background: #fff; }
.ruler-top { display: flex; height: 11px; border-bottom: 1px solid #000; }
.ticks {
  background:
    repeating-linear-gradient(90deg, #000 0 1px, transparent 1px 50px) 0 100% / 100% 9px no-repeat,
    repeating-linear-gradient(90deg, #000 0 1px, transparent 1px 5px) 0 100% / 100% 4px no-repeat;
}
.ticks-long { flex: 0 1 580px; }
.ticks-mid { flex: 0 1 177px; border-right: 1px solid #000; }
.ticks-rest { flex: 1; }
.dots { width: 22px; height: 6px; margin: 0 1px; border: 1px dotted #000; border-top: 0; }
.dots-start { width: 6px; margin: 0 1px 0 0; border-left: 0; }
.stage { display: flex; flex: 1; }
.ruler-left {
  width: 8px;
  background:
    repeating-linear-gradient(#000 0 1px, transparent 1px 50px) 0 -1px / 100% 600px no-repeat,
    repeating-linear-gradient(#000 0 1px, transparent 1px 10px) 100% -1px / 4px 600px no-repeat,
    repeating-linear-gradient(#000 0 1px, transparent 1px 5px) 100% -1px / 2px 600px no-repeat;
}
.paper { flex: 1; border: 10px solid #808080; background: #fff; }

/* properties */
.side { display: flex; flex-direction: column; overflow: hidden; background: #ededed; }
.nav { display: grid; grid-template-columns: repeat(3, 80px); grid-auto-rows: 60px; height: 126px; padding-top: 2px; justify-items: center; align-items: start; }
.nav-item { display: flex; flex-direction: column; align-items: center; gap: 1px; padding: 4px 5px 2px; border: 1px solid transparent; }
.nav-item svg { width: 32px; height: 32px; }
.nav-low { padding-top: 3px; }
.nav-on { border-color: #000; background: #fff; color: #008000; font-size: 13px; font-weight: 700; }
.side-title {
  height: 19px;
  padding-left: 4px;
  border-top: 1px solid #aaa;
  background: linear-gradient(90deg, #dcdcdc 45%, #bcbcbc);
  font-size: 15px;
  line-height: 14px;
}
.side-body { display: flex; flex: 1; }
.form { flex: 1; min-width: 0; padding: 0 0 0 5px; }
.row { display: flex; align-items: center; height: 24px; }
.name { width: 65px; padding-top: 2px; }
.column { width: 66px; padding: 2px 0 0 2px; color: #008000; font-size: 13px; }
.row:first-child { height: 25px; padding-bottom: 2px; }
.field {
  flex: 1;
  min-width: 0;
  height: 22px;
  margin-right: 9px;
  padding: 2px 6px 0;
  border: 1px solid #b5b59c;
  background: linear-gradient(#ededed 4px, #fff 4px);
}
.summary-row { gap: 5px; height: 22px; padding-bottom: 1px; }
.summary-row label { padding-top: 4px; }
.summary {
  display: block;
  width: 100%;
  height: 154px;
  margin-top: 2px;
  border: 1px solid #b5b59c;
  border-right: 0;
  background:
    linear-gradient(#e6e6e6, #e6e6e6) right top 2px / 10px 14px no-repeat,
    linear-gradient(#e6e6e6, #e6e6e6) right bottom 2px / 10px 14px no-repeat #fff;
  resize: none;
}
.source-row { margin-top: 7px; }
.source { height: 24px; color: #ff4848; font-family: "Liberation Serif", "Noto Sans CJK SC", serif; font-size: 14px; }
.quote { margin-top: 29px; }
.quote-num { padding: 0 2px; color: #00f; }
.add-ref { display: block; margin: 7px 5px 0 auto; }
.scroll { display: flex; flex: none; flex-direction: column; width: 8px; overflow: hidden; background: #fff; }
.scroll-end { flex: none; width: 8px; height: 17px; background: #ededed; }
.scroll-down { margin-top: auto; }
.scroll-thumb { height: 298px; background: #e6e6e6; border-left: 1px solid #fff; }

/* bottom bars */
.modes { display: flex; height: 30px; background: #f4f4f4; font-size: 14px; }
.mode { display: flex; align-items: center; gap: 2px; height: 21px; margin-left: 5px; }
.mode-on { margin-left: 8px; padding: 0 2px; border: 1px solid; border-color: #999 #fff #fff #999; background: #e6e6e6; }
.bar { width: 1px; height: 14px; margin: 0 8px; background: #000; }
.commands { display: flex; gap: 2px; }
.command {
  height: 26px;
  padding: 0 6px 3px;
  border: 1px solid #a9bac6;
  border-right-color: #5f8195;
  border-bottom-color: #5f8195;
  background: linear-gradient(#f4f6f7 19px, #c3d0d5 19px, #c3d0d5 20px, #edf3f6 20px);
  color: #002b80;
  white-space: nowrap;
}
.latin { font-family: "Liberation Mono", monospace; font-size: 12px; }
.actions { display: flex; gap: 10px; justify-content: center; height: 25px; padding: 3px 0 0 4px; background: #ececec; }
.action {
  width: 100px;
  height: 22px;
  padding-top: 2px;
  border: 1px solid #3b5f94;
  border-radius: 2px;
  background: linear-gradient(#fff 40%, #b9d3fa);
}

/* guidance drawn over the page */
.notes { position: absolute; inset: 0; pointer-events: none; }
.note { position: absolute; color: #ff3b3b; font-size: 13px; line-height: 17px; white-space: nowrap; }
.n1 { top: 6px; left: 57px; }
.n2 { top: 179px; left: 85px; }
.n4 { top: 517px; left: 514px; }
.n9 { top: 544px; left: 280px; }
.n5 { top: 283px; left: 924px; }
.n6 { top: 316px; left: 924px; }
.n7 { top: 375px; left: 873px; }
.n8 { top: 488px; left: 867px; color: #f00; font-size: 14px; }
.boxed { border: 3px solid #3a96e8; }
.b1 { top: 187px; left: 621px; padding: 6px 7px 5px; }
.b2 { top: 249px; left: 626px; padding: 13px 3px 14px; }
.frame { position: absolute; top: 158px; left: 858px; width: 224px; height: 60px; border: 3px solid #3a96e8; }
.cyan { position: absolute; top: 92px; left: 940px; width: 72px; height: 65px; border: 4px solid #1edada; outline: 1px solid #e040d8; }
.arrows { position: absolute; top: 0; left: 0; width: 1084px; height: 678px; }
```
